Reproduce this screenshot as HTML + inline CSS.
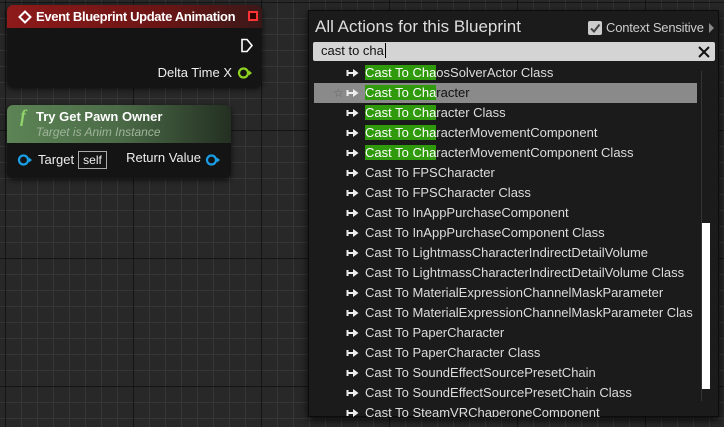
<!DOCTYPE html>
<html><head><style>
*{margin:0;padding:0;box-sizing:border-box}
body{width:724px;height:427px;overflow:hidden;position:relative;font-family:"Liberation Sans",sans-serif;
background-color:#282828;
background-image:
linear-gradient(90deg,#151515 1px,transparent 1px),
linear-gradient(0deg,#151515 1px,transparent 1px),
linear-gradient(90deg,#363636 1px,transparent 1px),
linear-gradient(0deg,#363636 1px,transparent 1px);
background-size:128px 128px,128px 128px,16px 16px,16px 16px;
background-position:5px 0,0 3px,5px 0,0 3px;}
.node{position:absolute;background:#141414;border-radius:6px;box-shadow:0 2px 6px rgba(0,0,0,.7);overflow:hidden;color:#eee}
.panel{position:absolute;left:308px;top:10px;width:411px;height:407px;background:#1b1b1b;border:1px solid #0c0c0c;box-shadow:0 3px 8px rgba(0,0,0,.8)}
.row{position:absolute;left:56px;height:20px;line-height:20px;font-size:13px;color:#ddd;white-space:nowrap}
.row .h{background:#2f9a0c;color:#fff}
.ar{position:absolute;left:37px;width:14px;height:20px}
</style></head><body>
<svg width="0" height="0" style="position:absolute"><defs><symbol id="a" viewBox="0 0 14 20"><path d="M1.5 7V13M1.5 10H8" stroke="#eee" stroke-width="2"/><path d="M7 6L12.5 10 7 14Z" fill="#eee"/></symbol></defs></svg>

<div class="node" style="left:7px;top:5px;width:255px;height:82px">
 <div style="height:23px;background:linear-gradient(90deg,#8e1a1a,#6b1515 60%,#3a1818);"></div>
 <svg style="position:absolute;left:11px;top:5px" width="14" height="14"><path d="M7 1.5L12.5 7 7 12.5 1.5 7Z" fill="none" stroke="#fff" stroke-width="2"/></svg>
 <div style="position:absolute;left:29px;top:4px;font-size:13px;font-weight:bold;color:#fff;letter-spacing:-0.35px">Event Blueprint Update Animation</div>
 <div style="position:absolute;left:241px;top:6px;width:10px;height:10px;border:2px solid #f33;background:#300"></div>
 <svg style="position:absolute;left:233px;top:33px" width="14" height="15"><path d="M2 1.5H7L12 7.5 7 13.5H2Z" fill="none" stroke="#fff" stroke-width="1.6"/></svg>
 <div style="position:absolute;right:30px;top:60px;font-size:13px">Delta Time X</div>
 <svg style="position:absolute;left:230px;top:61px" width="16" height="14"><circle cx="6.5" cy="7" r="4.5" fill="none" stroke="#8fd321" stroke-width="2.2"/><path d="M12 4.5L15 7 12 9.5Z" fill="#8fd321"/></svg>
</div>

<div class="node" style="left:7px;top:105px;width:224px;height:73px">
 <div style="height:38px;background:linear-gradient(90deg,#5c8455,#4b6b47 50%,#243022);"></div>
 <div style="position:absolute;left:13px;top:1px;font-size:18px;font-style:italic;font-family:'Liberation Serif',serif;color:#8fd36a;font-weight:bold">f</div>
 <div style="position:absolute;left:29px;top:4px;font-size:13px;font-weight:bold;color:#fff">Try Get Pawn Owner</div>
 <div style="position:absolute;left:29px;top:20px;font-size:12px;font-style:italic;color:#9fb49a">Target is Anim Instance</div>
 <svg style="position:absolute;left:10px;top:48px" width="16" height="14"><circle cx="6.5" cy="7" r="4.5" fill="none" stroke="#1a9ee5" stroke-width="2.2"/><path d="M12 4.5L15 7 12 9.5Z" fill="#1a9ee5"/></svg>
 <div style="position:absolute;left:31px;top:47px;font-size:13px">Target</div>
 <div style="position:absolute;left:71px;top:46px;width:29px;height:18px;border:1px solid #aaa;font-size:12px;text-align:center;line-height:16px">self</div>
 <div style="position:absolute;right:30px;top:45px;font-size:13px">Return Value</div>
 <svg style="position:absolute;left:198px;top:48px" width="16" height="14"><circle cx="6.5" cy="7" r="4.5" fill="none" stroke="#1a9ee5" stroke-width="2.2"/><path d="M12 4.5L15 7 12 9.5Z" fill="#1a9ee5"/></svg>
</div>

<div class="panel">
 <div style="position:absolute;left:6px;top:6px;font-size:17px;color:#ddd">All Actions for this Blueprint</div>
 <div style="position:absolute;left:279px;top:10px;width:14px;height:14px;background:#ccc;border-radius:2px"></div>
 <svg style="position:absolute;left:280px;top:11px" width="12" height="12"><path d="M2 6.5L5 9.5 10.5 2.5" fill="none" stroke="#444" stroke-width="2"/></svg>
 <div style="position:absolute;left:297px;top:9px;font-size:13px;color:#ccc;letter-spacing:-0.2px">Context Sensitive</div>
 <svg style="position:absolute;left:400px;top:11px" width="6" height="12"><path d="M0 1L5 6 0 11Z" fill="#888"/></svg>
 <div style="position:absolute;left:4px;top:31px;width:402px;height:19px;background:#d4d4d4;border-radius:2px"></div>
 <div style="position:absolute;left:12px;top:32px;font-size:13px;color:#111">cast to cha<span style="border-left:1px solid #000;margin-left:1px"></span></div>
 <svg style="position:absolute;left:388px;top:34px" width="14" height="14"><path d="M2 2L12 12M12 2L2 12" stroke="#111" stroke-width="2"/></svg>
 <div style="position:absolute;left:5px;top:72px;width:383px;height:20px;background:#8a8a8a"></div>
 <div style="position:absolute;left:24px;top:72px;font-size:12px;color:#666;line-height:20px">☆</div>
 <div style="position:absolute;left:392px;top:212px;width:9px;height:166px;background:#fff"></div>
 <div style="position:absolute;left:392px;top:60px;width:1px;height:330px;background:#333"></div>
 <div style="position:absolute;left:0;top:52px;width:392px;height:354px;overflow:hidden">
  <svg class="ar" style="top:0"><use href="#a"/></svg><div class="row" style="top:0"><span class="h">Cast To Cha</span>osSolverActor Class</div>
  <svg class="ar" style="top:20px"><use href="#a"/></svg><div class="row" style="top:20px;color:#111"><span class="h">Cast To Cha</span>racter</div>
  <svg class="ar" style="top:40px"><use href="#a"/></svg><div class="row" style="top:40px"><span class="h">Cast To Cha</span>racter Class</div>
  <svg class="ar" style="top:60px"><use href="#a"/></svg><div class="row" style="top:60px"><span class="h">Cast To Cha</span>racterMovementComponent</div>
  <svg class="ar" style="top:80px"><use href="#a"/></svg><div class="row" style="top:80px"><span class="h">Cast To Cha</span>racterMovementComponent Class</div>
  <svg class="ar" style="top:100px"><use href="#a"/></svg><div class="row" style="top:100px">Cast To FPSCharacter</div>
  <svg class="ar" style="top:120px"><use href="#a"/></svg><div class="row" style="top:120px">Cast To FPSCharacter Class</div>
  <svg class="ar" style="top:140px"><use href="#a"/></svg><div class="row" style="top:140px">Cast To InAppPurchaseComponent</div>
  <svg class="ar" style="top:160px"><use href="#a"/></svg><div class="row" style="top:160px">Cast To InAppPurchaseComponent Class</div>
  <svg class="ar" style="top:180px"><use href="#a"/></svg><div class="row" style="top:180px">Cast To LightmassCharacterIndirectDetailVolume</div>
  <svg class="ar" style="top:200px"><use href="#a"/></svg><div class="row" style="top:200px">Cast To LightmassCharacterIndirectDetailVolume Class</div>
  <svg class="ar" style="top:220px"><use href="#a"/></svg><div class="row" style="top:220px">Cast To MaterialExpressionChannelMaskParameter</div>
  <svg class="ar" style="top:240px"><use href="#a"/></svg><div class="row" style="top:240px">Cast To MaterialExpressionChannelMaskParameter Clas</div>
  <svg class="ar" style="top:260px"><use href="#a"/></svg><div class="row" style="top:260px">Cast To PaperCharacter</div>
  <svg class="ar" style="top:280px"><use href="#a"/></svg><div class="row" style="top:280px">Cast To PaperCharacter Class</div>
  <svg class="ar" style="top:300px"><use href="#a"/></svg><div class="row" style="top:300px">Cast To SoundEffectSourcePresetChain</div>
  <svg class="ar" style="top:320px"><use href="#a"/></svg><div class="row" style="top:320px">Cast To SoundEffectSourcePresetChain Class</div>
  <svg class="ar" style="top:340px"><use href="#a"/></svg><div class="row" style="top:340px">Cast To SteamVRChaperoneComponent</div>
 </div>
</div>
</body></html>
